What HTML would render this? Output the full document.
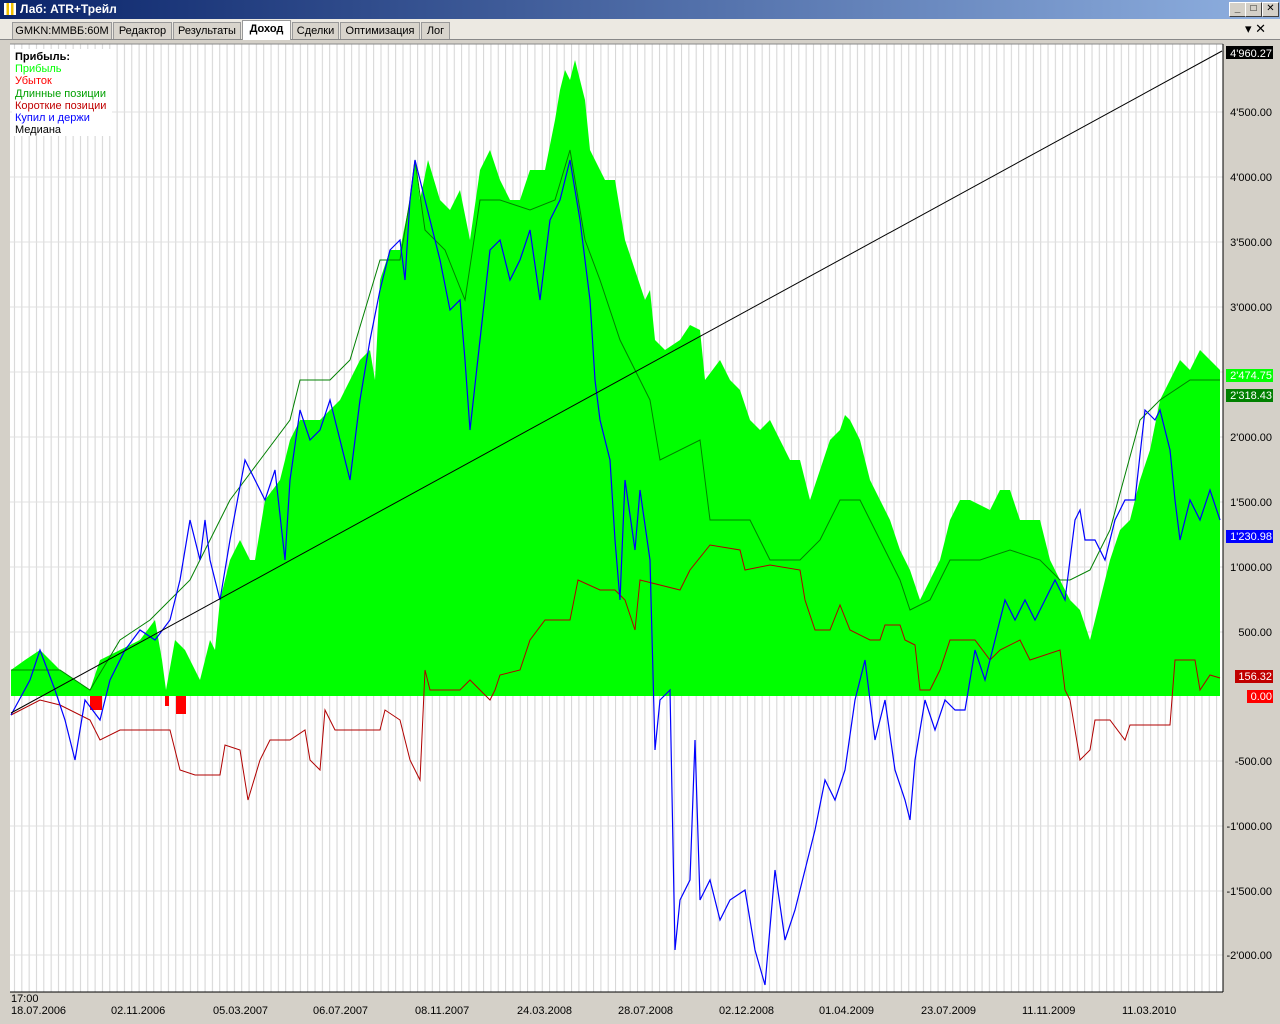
<!DOCTYPE html>
<html><head><meta charset="utf-8"><style>
body{margin:0;width:1280px;height:1024px;overflow:hidden;background:#d4d0c8;font-family:"Liberation Sans","DejaVu Sans",sans-serif;position:relative}
.title{position:absolute;left:0;top:0;width:1280px;height:19px;background:linear-gradient(90deg,#0a246a,#8fb0e0);color:#fff;font-weight:bold;font-size:12px;line-height:18px}
.tabs{position:absolute;top:19px;left:0;width:1280px;height:20px;background:#ece9e2;border-bottom:1px solid #888}
.tab{position:absolute;top:3px;height:16px;font-size:11px;line-height:16px;border:1px solid #999;border-bottom:none;background:#d8d4cc;text-align:center;color:#000}
.wb{position:absolute;top:2px;width:15px;height:13px;background:#d4d0c8;border:1px solid #fff;border-right-color:#404040;border-bottom-color:#404040;font-size:10px;line-height:12px;text-align:center;color:#000;font-weight:bold}
</style></head><body>
<div class="title"><span style="display:inline-block;width:12px;height:12px;margin:3px 4px 0 4px;vertical-align:top;background:linear-gradient(90deg,#fff 0 20%,#f0c000 20% 40%,#fff 40% 60%,#f0c000 60% 80%,#fff 80%)"></span>Лаб: ATR+Трейл
<div class="wb" style="left:1229px">_</div><div class="wb" style="left:1245px">□</div><div class="wb" style="left:1262px">✕</div></div>
<div class="tabs">
<div class="tab" style="left:12px;width:98px">GMKN:MMBБ:60M</div>
<div class="tab" style="left:113px;width:57px">Редактор</div>
<div class="tab" style="left:173px;width:66px">Результаты</div>
<div class="tab" style="left:242px;width:47px;font-weight:bold;background:#fff;top:1px;height:19px">Доход</div>
<div class="tab" style="left:292px;width:45px">Сделки</div>
<div class="tab" style="left:340px;width:78px">Оптимизация</div>
<div class="tab" style="left:421px;width:27px">Лог</div>
<div style="position:absolute;left:1245px;top:2px;font-size:13px">▾ ✕</div>
</div>
<svg style="position:absolute;left:0;top:40px" width="1280" height="984" viewBox="0 40 1280 984">
<defs><pattern id="vg" x="11" y="0" width="7.33" height="10" patternUnits="userSpaceOnUse"><rect x="3" width="1" height="10" fill="#d4d4d4"/></pattern></defs>
<rect x="6" y="42" width="1271" height="980" fill="#d4d0c8"/>
<rect x="10" y="44" width="1213" height="948" fill="#fff"/>
<rect x="10" y="44" width="1213" height="948" fill="url(#vg)"/>
<line x1="10" y1="44" x2="1223" y2="44" stroke="#888"/>
<g stroke="#e0e0e0"><line x1="10" x2="1223" y1="112" y2="112"/><line x1="10" x2="1223" y1="177" y2="177"/><line x1="10" x2="1223" y1="242" y2="242"/><line x1="10" x2="1223" y1="307" y2="307"/><line x1="10" x2="1223" y1="372" y2="372"/><line x1="10" x2="1223" y1="437" y2="437"/><line x1="10" x2="1223" y1="502" y2="502"/><line x1="10" x2="1223" y1="567" y2="567"/><line x1="10" x2="1223" y1="632" y2="632"/><line x1="10" x2="1223" y1="761" y2="761"/><line x1="10" x2="1223" y1="826" y2="826"/><line x1="10" x2="1223" y1="891" y2="891"/><line x1="10" x2="1223" y1="955" y2="955"/></g>
<polygon fill="#00ff00" points="11,696 11,670 25,660 40,650 50,660 60,670 75,680 90,690 100,660 110,655 120,650 140,640 155,620 162,660 166,690 175,640 185,650 190,660 200,680 210,640 215,650 220,600 230,560 240,540 250,560 255,560 265,500 280,480 290,440 300,420 320,420 340,400 350,380 360,360 370,350 375,380 380,280 390,250 400,250 410,200 415,160 420,200 428,160 440,200 450,210 460,190 470,240 480,170 490,150 500,180 510,200 520,200 530,170 545,170 555,120 560,90 565,70 570,80 575,60 580,80 585,100 590,150 595,160 605,180 615,180 625,240 635,270 645,300 650,290 655,340 665,350 680,340 690,325 700,330 705,380 720,360 730,380 740,390 750,420 760,430 770,420 780,440 790,460 800,460 810,500 820,470 830,440 840,430 845,415 850,420 860,440 870,480 880,500 890,520 900,550 910,570 920,600 930,580 940,560 950,520 960,500 970,500 990,510 1000,490 1010,490 1020,520 1040,520 1050,560 1060,580 1070,600 1080,610 1090,640 1100,600 1110,560 1120,530 1130,520 1140,480 1150,450 1160,400 1170,380 1180,360 1190,370 1200,350 1210,360 1220,370 1220,696"/>
<g fill="#ff0000"><rect x="90" y="696" width="12" height="14"/><rect x="165" y="696" width="4" height="10"/><rect x="176" y="696" width="10" height="18"/></g>
<polyline fill="none" stroke="#008000" stroke-width="1" points="11,670 60,670 90,690 120,640 150,620 190,580 230,500 260,460 290,420 300,380 330,380 350,360 380,260 400,260 410,200 415,160 425,230 445,250 465,300 480,200 500,200 530,210 555,200 570,150 585,240 600,280 620,340 650,400 660,460 700,440 710,520 750,520 770,560 800,560 820,540 840,500 860,500 870,520 890,560 900,580 910,610 930,600 950,560 980,560 1010,550 1040,560 1060,580 1070,580 1090,570 1110,530 1140,420 1160,400 1190,380 1220,380"/>
<polyline fill="none" stroke="#b00000" stroke-width="1" points="11,715 40,700 60,705 90,720 100,740 120,730 170,730 180,770 195,775 220,775 225,745 240,750 248,800 260,760 270,740 290,740 305,730 310,760 320,770 325,710 335,730 380,730 385,710 400,720 410,760 420,780 425,670 430,690 460,690 470,680 490,700 495,690 500,675 520,670 530,640 545,620 570,620 578,580 600,590 615,590 625,600 635,630 640,580 680,590 690,570 710,545 740,550 745,570 770,565 800,570 805,600 815,630 830,630 840,605 850,630 870,640 880,640 885,625 900,625 905,640 915,645 920,690 930,690 940,670 950,640 975,640 990,660 1000,650 1020,640 1030,660 1060,650 1065,690 1070,700 1080,760 1090,750 1095,720 1110,720 1125,740 1130,725 1170,725 1175,660 1195,660 1200,690 1210,675 1220,678"/>
<polyline fill="none" stroke="#0000ff" stroke-width="1.2" points="11,715 30,680 40,650 55,690 65,720 75,760 85,700 100,720 110,680 125,650 140,630 155,640 170,620 180,580 190,520 200,560 205,520 210,560 220,600 230,540 245,460 255,480 265,500 275,470 285,560 290,480 300,410 310,440 320,430 330,400 340,440 350,480 360,400 370,340 380,290 390,250 400,240 405,280 410,200 415,160 420,180 430,220 440,260 450,310 460,300 465,360 470,430 480,340 490,250 500,240 510,280 520,260 530,230 540,300 550,220 560,200 570,160 580,220 590,300 595,380 600,420 610,460 615,540 620,600 625,480 635,550 640,490 650,560 655,750 660,700 670,690 675,950 680,900 690,880 695,740 700,900 710,880 720,920 730,900 745,890 755,950 765,985 775,870 785,940 795,910 805,870 815,830 825,780 835,800 845,770 855,700 865,660 875,740 885,700 895,770 905,800 910,820 915,760 925,700 935,730 945,700 955,710 965,710 975,650 985,680 995,640 1005,600 1015,620 1025,600 1035,620 1045,600 1055,580 1065,600 1075,520 1080,510 1085,540 1095,540 1105,560 1115,520 1125,500 1135,500 1145,410 1155,420 1160,410 1170,450 1175,500 1180,540 1190,500 1200,520 1210,490 1220,520"/>
<line x1="11" y1="713" x2="1222" y2="51" stroke="#000" stroke-width="1"/>
<line x1="10" y1="992" x2="1223" y2="992" stroke="#000"/>
<line x1="1223" y1="44" x2="1223" y2="992" stroke="#000"/>
<g font-family="Liberation Sans, DejaVu Sans, sans-serif" font-size="11" fill="#000" text-anchor="end">
<rect x="1226" y="46" width="47" height="13" fill="#000"/><text x="1272" y="57" fill="#fff">4'960.27</text>
<text x="1272" y="116">4'500.00</text><text x="1272" y="181">4'000.00</text><text x="1272" y="246">3'500.00</text><text x="1272" y="311">3'000.00</text>
<rect x="1226" y="369" width="47" height="13" fill="#00ff00"/><text x="1272" y="379" fill="#fff">2'474.75</text>
<rect x="1226" y="389" width="47" height="13" fill="#008000"/><text x="1272" y="399" fill="#fff">2'318.43</text>
<text x="1272" y="441">2'000.00</text><text x="1272" y="506">1'500.00</text>
<rect x="1226" y="530" width="47" height="13" fill="#0000ff"/><text x="1272" y="540" fill="#fff">1'230.98</text>
<text x="1272" y="571">1'000.00</text><text x="1272" y="636">500.00</text>
<rect x="1235" y="670" width="38" height="13" fill="#c00000"/><text x="1272" y="680" fill="#fff">156.32</text>
<rect x="1247" y="690" width="26" height="13" fill="#ff0000"/><text x="1272" y="700" fill="#fff">0.00</text>
<text x="1272" y="765">-500.00</text><text x="1272" y="830">-1'000.00</text><text x="1272" y="895">-1'500.00</text><text x="1272" y="959">-2'000.00</text>
</g>
<g font-family="Liberation Sans, DejaVu Sans, sans-serif" font-size="11" fill="#000">
<text x="11" y="1002">17:00</text>
<text x="11" y="1014">18.07.2006</text><text x="111" y="1014">02.11.2006</text><text x="213" y="1014">05.03.2007</text><text x="313" y="1014">06.07.2007</text><text x="415" y="1014">08.11.2007</text><text x="517" y="1014">24.03.2008</text><text x="618" y="1014">28.07.2008</text><text x="719" y="1014">02.12.2008</text><text x="819" y="1014">01.04.2009</text><text x="921" y="1014">23.07.2009</text><text x="1022" y="1014">11.11.2009</text><text x="1122" y="1014">11.03.2010</text>
</g>
<rect x="12" y="49" width="100" height="87" fill="#fff"/>
<g font-family="Liberation Sans, DejaVu Sans, sans-serif" font-size="11">
<text x="15" y="60" font-weight="bold" fill="#000">Прибыль:</text>
<text x="15" y="72" fill="#00ff00">Прибыль</text>
<text x="15" y="84" fill="#ff0000">Убыток</text>
<text x="15" y="97" fill="#00a000">Длинные позиции</text>
<text x="15" y="109" fill="#c00000">Короткие позиции</text>
<text x="15" y="121" fill="#0000ff">Купил и держи</text>
<text x="15" y="133" fill="#000">Медиана</text>
</g>
</svg>
</body></html>
